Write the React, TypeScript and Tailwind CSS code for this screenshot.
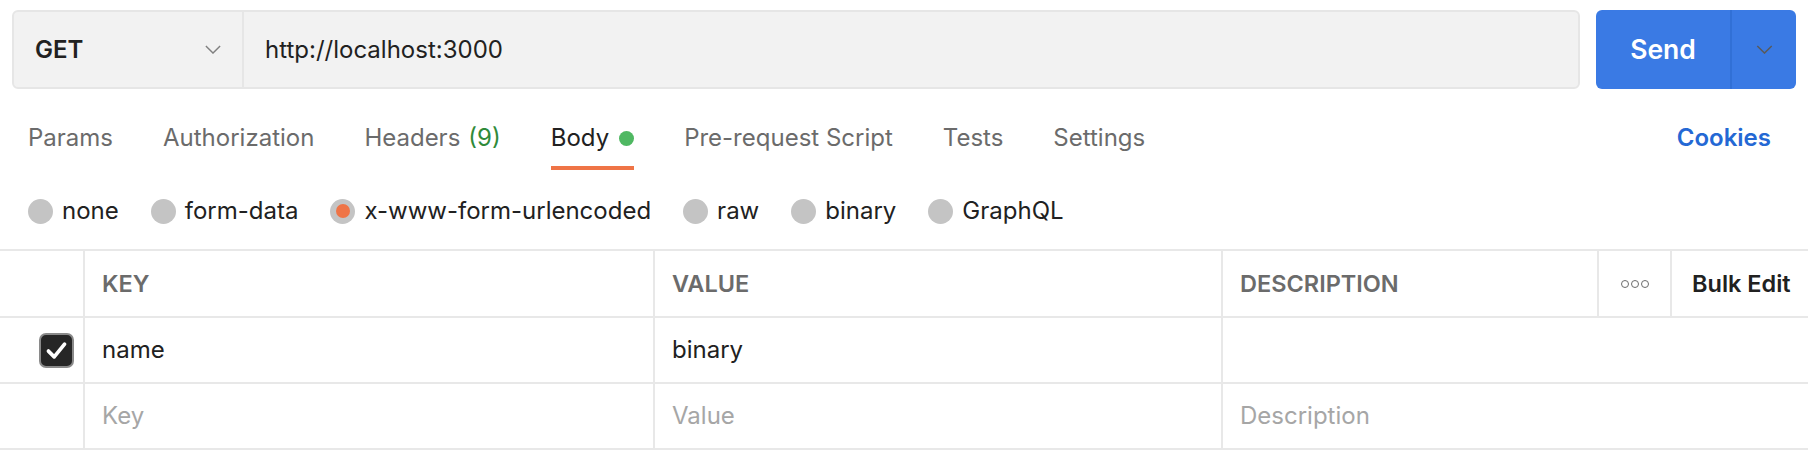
const font = { fontFamily: 'Inter, "Noto Sans", sans-serif' };

function Chevron({ className }: { className?: string }) {
  return (
    <svg viewBox="0 0 18 10" className={className} fill="none">
      <polyline points="1,1 9,9 17,1" stroke="currentColor" strokeWidth="1.6" />
    </svg>
  );
}

function Radio({ label, checked }: { label: string; checked?: boolean }) {
  return (
    <div className="flex items-center gap-[9px]">
      <span className="w-[25px] h-[25px] rounded-full bg-[#c4c4c4] flex items-center justify-center">
        {checked && <span className="w-[14px] h-[14px] rounded-full bg-[#ef7446]" />}
      </span>
      <span className="text-[24px] text-[#212121]">{label}</span>
    </div>
  );
}

function Checkbox() {
  return (
    <span className="w-[35px] h-[35px] rounded-[7px] bg-[#262626] border-2 border-[#8a8a8a] flex items-center justify-center">
      <svg viewBox="0 0 20 20" className="w-[23px] h-[23px]" fill="none">
        <polyline points="3,10.5 8,15.5 17,4.5" stroke="white" strokeWidth="3.2" strokeLinecap="round" strokeLinejoin="round" />
      </svg>
    </span>
  );
}

const tabs = ['Params', 'Authorization', 'Headers', 'Body', 'Pre-request Script', 'Tests', 'Settings'];
const bodyTypes = ['none', 'form-data', 'x-www-form-urlencoded', 'raw', 'binary', 'GraphQL'];

export default function App() {
  return (
    <div className="w-[1808px] h-[458px] bg-white overflow-hidden" style={font}>
      {/* URL bar */}
      <div className="flex gap-4 px-3 pt-[10px]">
        <div className="flex-1 h-[79px] flex bg-[#f2f2f2] border-2 border-[#e6e6e6] rounded-[6px]">
          <div className="w-[230px] flex items-center justify-between pl-[21px] pr-[21px] border-r-2 border-[#e6e6e6]">
            <span className="text-[24px] font-semibold text-[#212121]">GET</span>
            <Chevron className="w-[16px] h-[9px] text-[#808080]" />
          </div>
          <div className="flex items-center pl-[21px] text-[24px] text-[#212121]">http://localhost:3000</div>
        </div>
        <div className="w-[200px] h-[79px] flex rounded-[6px] bg-[#3a7ae4] text-white">
          <div className="w-[136px] flex items-center justify-center text-[26.5px] font-semibold border-r-2 border-[#3170d6]">Send</div>
          <div className="flex-1 flex items-center justify-center">
            <Chevron className="w-[17px] h-[9px] text-[#5a5a5a]" />
          </div>
        </div>
      </div>

      {/* Tabs */}
      <div className="flex items-start justify-between pl-[28px] pr-[37px] mt-[31px]">
        <div className="flex gap-[50px]">
          {tabs.map((t) => (
            <div key={t} className="flex flex-col">
              <div className={`flex items-center gap-[10px] text-[24px] ${t === 'Body' ? 'text-[#212121]' : 'text-[#6b6b6b]'}`}>
                <span>{t}</span>
                {t === 'Headers' && <span className="text-[#2f8a3a] -ml-[2px]">(9)</span>}
                {t === 'Body' && <span className="w-[15px] h-[15px] rounded-full bg-[#4fb862]" />}
              </div>
              <div className={`h-[4px] mt-[10px] ${t === 'Body' ? 'bg-[#ef7446]' : ''}`} />
            </div>
          ))}
        </div>
        <span className="text-[24px] font-semibold text-[#2468d4]">Cookies</span>
      </div>

      {/* Body type radios */}
      <div className="flex items-center gap-[32px] pl-[28px] mt-[23px]">
        {bodyTypes.map((b) => (
          <Radio key={b} label={b} checked={b === 'x-www-form-urlencoded'} />
        ))}
      </div>

      {/* Table */}
      <div className="mt-[20px] border-t-2 border-[#e8e8e8] text-[24px]">
        <div className="grid grid-cols-[85px_570px_568px_1fr] h-[67px] border-b-2 border-[#e8e8e8] text-[23.5px]">
          <div className="border-r-2 border-[#e8e8e8]" />
          <div className="flex items-center pl-[17px] border-r-2 border-[#e8e8e8] font-semibold text-[#6b6b6b]">KEY</div>
          <div className="flex items-center pl-[17px] border-r-2 border-[#e8e8e8] font-semibold text-[#6b6b6b]">VALUE</div>
          <div className="flex">
            <div className="flex-1 flex items-center pl-[17px] border-r-2 border-[#e8e8e8] font-semibold text-[#6b6b6b]">DESCRIPTION</div>
            <div className="w-[73px] flex items-center justify-center gap-[2px] border-r-2 border-[#e8e8e8]">
              {[0, 1, 2].map((i) => (
                <span key={i} className="w-[8px] h-[8px] rounded-full border-[1.5px] border-[#6b6b6b]" />
              ))}
            </div>
            <div className="w-[136px] flex items-center pl-[20px] font-semibold text-[#212121]">Bulk Edit</div>
          </div>
        </div>
        <div className="grid grid-cols-[85px_570px_568px_1fr] h-[66px] border-b-2 border-[#e8e8e8]">
          <div className="flex items-center justify-end pr-[9px] border-r-2 border-[#e8e8e8]">
            <Checkbox />
          </div>
          <div className="flex items-center pl-[17px] border-r-2 border-[#e8e8e8] text-[#212121]">name</div>
          <div className="flex items-center pl-[17px] border-r-2 border-[#e8e8e8] text-[#212121]">binary</div>
          <div />
        </div>
        <div className="grid grid-cols-[85px_570px_568px_1fr] h-[66px] border-b-2 border-[#e8e8e8] text-[#a6a6a6]">
          <div className="border-r-2 border-[#e8e8e8]" />
          <div className="flex items-center pl-[17px] border-r-2 border-[#e8e8e8]">Key</div>
          <div className="flex items-center pl-[17px] border-r-2 border-[#e8e8e8]">Value</div>
          <div className="flex items-center pl-[17px]">Description</div>
        </div>
      </div>
    </div>
  );
}
